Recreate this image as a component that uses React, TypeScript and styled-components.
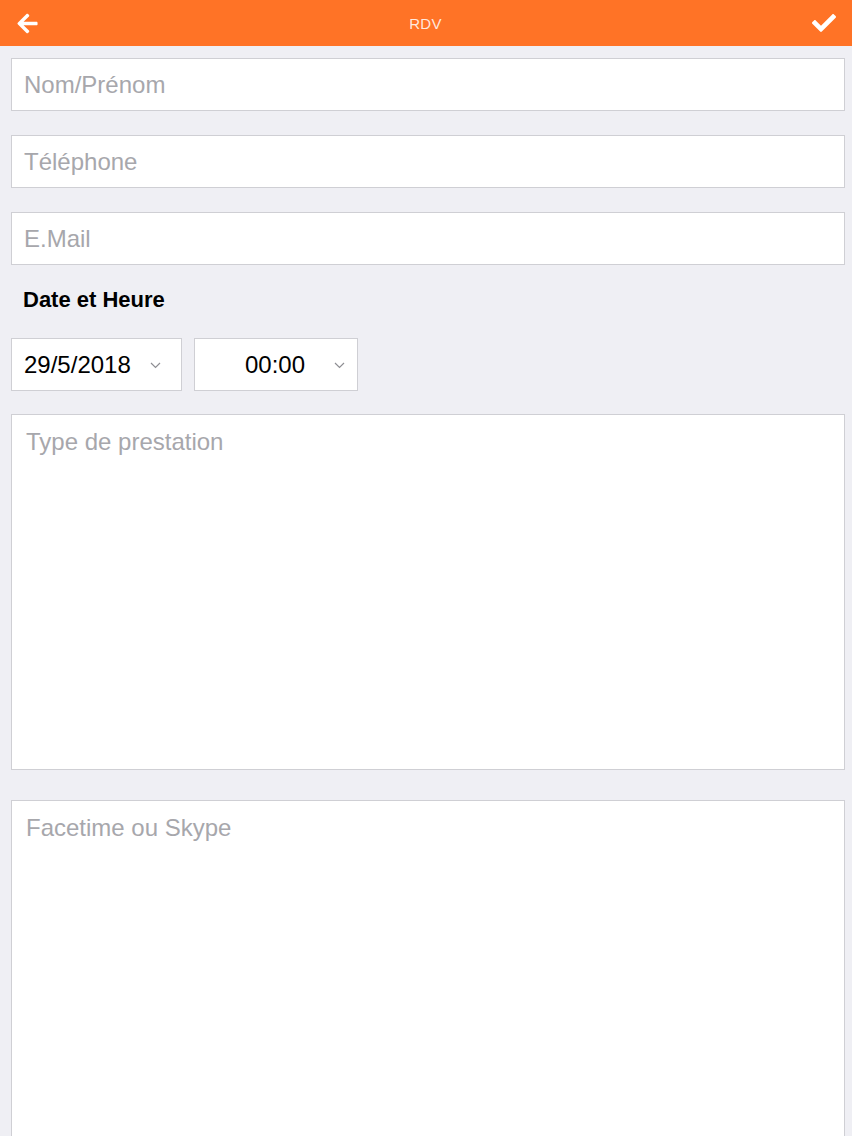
import React from "react";
import styled, { createGlobalStyle } from "styled-components";
import { FaArrowLeft, FaCheck } from "react-icons/fa";

const GlobalStyle = createGlobalStyle`
  html, body {
    margin: 0;
    padding: 0;
    background: #efeff4;
    font-family: "Liberation Sans", Arial, sans-serif;
  }
  * {
    box-sizing: border-box;
  }
`;

const Chevron: React.FC = () => (
  <svg width="11" height="7" viewBox="0 0 11 7">
    <polyline points="1,1 5.5,5.5 10,1" fill="none" stroke="#8e8e93" strokeWidth="1.2" />
  </svg>
);

const App: React.FC = () => {
  return (
    <Page>
      <GlobalStyle />
      <Header>
        <HeaderButton aria-label="Retour">
          <FaArrowLeft size={23} />
        </HeaderButton>
        <Title>RDV</Title>
        <HeaderButton aria-label="Valider">
          <FaCheck size={24} />
        </HeaderButton>
      </Header>

      <Form>
        <TextField placeholder="Nom/Prénom" />
        <TextField placeholder="Téléphone" />
        <TextField placeholder="E.Mail" $last />

        <SectionLabel>Date et Heure</SectionLabel>
        <PickerRow>
          <Picker $width={171} $padLeft={12}>
            <PickerValue>29/5/2018</PickerValue>
            <ChevronWrap $gap={19}>
              <Chevron />
            </ChevronWrap>
          </Picker>
          <Picker $width={164} $padLeft={50}>
            <PickerValue>00:00</PickerValue>
            <ChevronWrap $gap={29}>
              <Chevron />
            </ChevronWrap>
          </Picker>
        </PickerRow>

        <TextArea placeholder="Type de prestation" />
        <TextArea placeholder="Facetime ou Skype" />
      </Form>
    </Page>
  );
};

export default App;

const Page = styled.div`
  width: 852px;
  height: 1136px;
  overflow: hidden;
  display: flex;
  flex-direction: column;
  background: #efeff4;
`;

const Header = styled.header`
  height: 46px;
  flex-shrink: 0;
  background: #ff7326;
  display: flex;
  align-items: center;
  justify-content: space-between;
  padding: 0 16px 0 15px;
`;

const HeaderButton = styled.div`
  width: 24px;
  height: 24px;
  display: flex;
  align-items: center;
  justify-content: center;
  color: #ffffff;
`;

const Title = styled.div`
  font-size: 15px;
  color: rgba(255, 255, 255, 0.85);
  letter-spacing: 0.3px;
`;

const Form = styled.div`
  display: flex;
  flex-direction: column;
  padding: 12px 7px 0 11px;
`;

const TextField = styled.input<{ $last?: boolean }>`
  height: 53px;
  margin: 0 0 ${(p) => (p.$last ? "22px" : "24px")};
  border: 1px solid #cfcfd4;
  border-radius: 0;
  background: #ffffff;
  padding: 0 12px;
  font-family: "Liberation Sans", Arial, sans-serif;
  font-size: 24px;
  color: #000;
  outline: none;

  &::placeholder {
    color: #a7a7ac;
  }
`;

const SectionLabel = styled.div`
  padding-left: 12px;
  line-height: 26px;
  font-size: 22px;
  font-weight: bold;
  color: #000;
  margin-bottom: 25px;
`;

const PickerRow = styled.div`
  display: flex;
  gap: 12px;
  margin-bottom: 23px;
`;

const Picker = styled.div<{ $width: number; $padLeft: number }>`
  width: ${(p) => p.$width}px;
  height: 53px;
  display: flex;
  align-items: center;
  padding-left: ${(p) => p.$padLeft}px;
  background: #ffffff;
  border: 1px solid #cfcfd4;
`;

const PickerValue = styled.span`
  font-size: 24px;
  color: #000;
`;

const ChevronWrap = styled.span<{ $gap: number }>`
  display: flex;
  margin-left: ${(p) => p.$gap}px;
  margin-top: 2px;
`;

const TextArea = styled.textarea`
  height: 356px;
  flex-shrink: 0;
  margin: 0 0 30px;
  border: 1px solid #cfcfd4;
  border-radius: 0;
  background: #ffffff;
  padding: 13px 14px;
  font-family: "Liberation Sans", Arial, sans-serif;
  font-size: 24px;
  line-height: 28px;
  resize: none;
  outline: none;

  &::placeholder {
    color: #a7a7ac;
  }
`;
